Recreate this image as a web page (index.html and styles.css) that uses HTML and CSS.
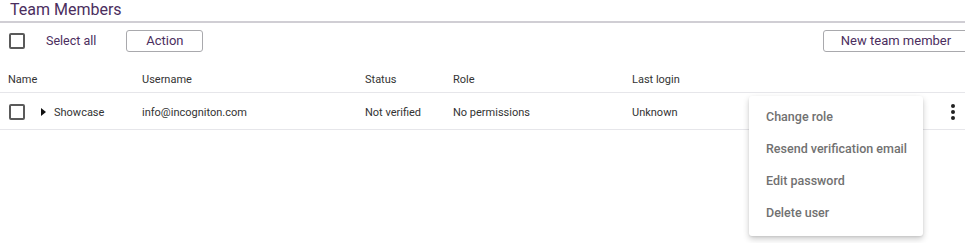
FILE: index.html
```html
<!DOCTYPE html>
<html lang="en">
<head>
    <meta charset="UTF-8">
    <title>Team Members</title>
    <link rel="stylesheet" href="styles.css">
</head>
<body>
    <div class="page">
        <h1 class="title">Team Members</h1>
        <div class="toolbar">
            <span class="checkbox"></span>
            <span class="select-all">Select all</span>
            <button class="btn btn-action">Action</button>
            <button class="btn btn-new">New team member</button>
        </div>
        <div class="table">
            <div class="row head">
                <div class="col name">Name</div>
                <div class="col user">Username</div>
                <div class="col status">Status</div>
                <div class="col role">Role</div>
                <div class="col login">Last login</div>
            </div>
            <div class="row">
                <div class="col name">
                    <span class="checkbox"></span>
                    <span class="caret"></span>
                    <span>Showcase</span>
                </div>
                <div class="col user">info@incogniton.com</div>
                <div class="col status">Not verified</div>
                <div class="col role">No permissions</div>
                <div class="col login">Unknown</div>
                <div class="kebab"><i></i><i></i><i></i></div>
                <ul class="menu">
                    <li>Change role</li>
                    <li>Resend verification email</li>
                    <li>Edit password</li>
                    <li>Delete user</li>
                </ul>
            </div>
        </div>
    </div>
</body>
</html>
```

FILE: styles.css
```css
* {
    box-sizing: border-box;
    margin: 0;
    padding: 0;
}
body {
    font-family: Roboto, "Noto Sans", sans-serif;
    background: #fff;
    color: #333;
    overflow: hidden;
}
.page {
    width: 965px;
    height: 243px;
}
.title {
    font-size: 16px;
    font-weight: 400;
    color: #4b2e5e;
    padding: 0 0 0 10px;
    height: 23px;
    line-height: 20px;
    border-bottom: 2px solid #d0ced4;
}
.toolbar {
    display: flex;
    align-items: center;
    height: 35px;
    padding: 0 0 0 9px;
}
.checkbox {
    display: inline-block;
    width: 16px;
    height: 16px;
    border: 2px solid #5a5a5a;
    border-radius: 2px;
    flex: none;
}
.select-all {
    font-size: 12.5px;
    color: #4b2e5e;
    margin-left: 21px;
}
.btn {
    font-family: Roboto, sans-serif;
    font-size: 13px;
    color: #4b2e5e;
    background: #fff;
    border: 1px solid #a9a9ad;
    border-radius: 3px;
    height: 22px;
}
.btn-action {
    width: 77px;
    margin-left: 30px;
}
.btn-new {
    width: 146px;
    margin-left: auto;
    margin-right: -4px;
    flex: none;
}
.table {
    margin-top: 15px;
    font-size: 11px;
}
.row {
    position: relative;
    display: flex;
    align-items: center;
    height: 37px;
    padding-top: 2px;
    border-bottom: 1px solid #e6e6ea;
}
.row.head {
    height: 20px;
    padding-top: 0;
    align-items: flex-start;
}
.col {
    flex: none;
}
.name {
    width: 142px;
    padding-left: 8px;
    display: flex;
    align-items: center;
}
.row .name .checkbox {
    margin-left: 1px;
}
.caret {
    width: 0;
    height: 0;
    border-top: 4px solid transparent;
    border-bottom: 4px solid transparent;
    border-left: 5px solid #111;
    margin: 0 8px 0 16px;
}
.user { width: 223px; }
.status { width: 88px; }
.role { width: 179px; }
.login { width: 120px; }
.kebab {
    position: absolute;
    right: 10px;
    top: 11px;
    display: flex;
    flex-direction: column;
    gap: 2px;
}
.kebab i {
    width: 4px;
    height: 4px;
    background: #222;
    border-radius: 50%;
}
.menu {
    position: absolute;
    left: 749px;
    top: 3px;
    width: 174px;
    list-style: none;
    background: #fff;
    padding: 5px 0 7px;
    border-radius: 3px;
    box-shadow: 0 3px 6px rgba(0, 0, 0, 0.2), 0 1px 2px rgba(0, 0, 0, 0.08);
    z-index: 2;
}
.menu li {
    font-size: 12.5px;
    font-weight: 500;
    color: #717171;
    height: 32px;
    line-height: 32px;
    padding-left: 17px;
    white-space: nowrap;
}
```
